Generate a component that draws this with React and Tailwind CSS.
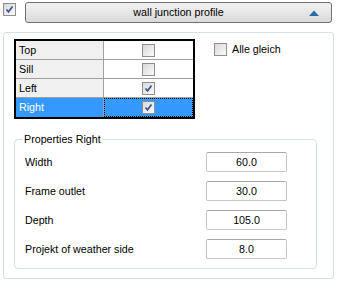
import React from "react";

const rows = [
  { name: "Top", on: false },
  { name: "Sill", on: false },
  { name: "Left", on: true },
  { name: "Right", on: true, sel: true },
];

const props = [
  ["Width", "60.0"],
  ["Frame outlet", "30.0"],
  ["Depth", "105.0"],
  ["Projekt of weather side", "8.0"],
];

function Check({ on }) {
  return (
    <div className="w-[13px] h-[13px] border border-[#8e8f8f] bg-gradient-to-br from-[#d8d8d8] to-[#fbfbfb] flex items-center justify-center shrink-0">
      {on && (
        <svg width="9" height="9" viewBox="0 0 9 9">
          <path d="M1.5 4.5 L3.5 6.8 L7.5 1.5" stroke="#3a5494" strokeWidth="1.7" fill="none" />
        </svg>
      )}
    </div>
  );
}

export default function App() {
  return (
    <div className="w-[338px] h-[284px] bg-white text-[10.7px] text-black font-['Liberation_Sans',Arial,sans-serif] leading-[13px]">
      <div className="flex items-start pt-[2px]">
        <div className="ml-[3px] mt-[1px]">
          <Check on />
        </div>
        <button className="ml-[9px] w-[307px] h-[21px] border border-[#707070] rounded-[3px] bg-gradient-to-b from-[#f2f2f2] to-[#dadada] flex items-center relative">
          <span className="flex-1 text-center">wall junction profile</span>
          <svg width="10" height="6" viewBox="0 0 10 6" className="absolute right-[12px] top-[7px]">
            <path d="M0 6 L5 0.5 L10 6 Z" fill="#2e6aa5" />
          </svg>
        </button>
      </div>

      <div className="mt-[9px] ml-[3px] w-[331px] h-[247px] border border-[#d5dfe5] rounded-[3px] pl-[10px] pt-[6px]">
        <div className="flex items-start">
          <div className="w-[181px] border-2 border-black">
            {rows.map((r, i) => (
              <div
                key={r.name}
                className={`flex h-[19px] ${i < rows.length - 1 ? "border-b border-[#a0a0a0]" : ""} ${r.sel ? "bg-[#3399ff] text-white" : ""}`}
              >
                <div className={`w-[88px] border-r border-[#a0a0a0] pl-[3px] flex items-center ${r.sel ? "" : "bg-[#f0f0f0]"}`}>
                  {r.name}
                </div>
                <div className={`flex-1 flex items-center justify-center ${r.sel ? "outline outline-1 outline-dotted outline-black -outline-offset-1" : "bg-white"}`}>
                  <Check on={r.on} />
                </div>
              </div>
            ))}
          </div>
          <div className="ml-[19px] mt-[4px] flex items-center gap-[5px]">
            <Check />
            <span>Alle gleich</span>
          </div>
        </div>

        <fieldset className="mt-[14px] w-[303px] border border-[#d5dfe5] rounded-[4px] pl-[10px] pb-[9px]">
          <legend className="ml-[-2px] px-[1px] leading-[13px]">Properties Right</legend>
          <div className="flex flex-col gap-[9px] pt-[6px]">
            {props.map(([k, v]) => (
              <div key={k} className="flex items-center h-[20px]">
                <div className="w-[181px]">{k}</div>
                <div className="w-[81px] h-[20px] border border-[#c6c6c6] border-t-[#a9a9a9] rounded-[2px] bg-white flex items-center justify-center">
                  {v}
                </div>
              </div>
            ))}
          </div>
        </fieldset>
      </div>
    </div>
  );
}
